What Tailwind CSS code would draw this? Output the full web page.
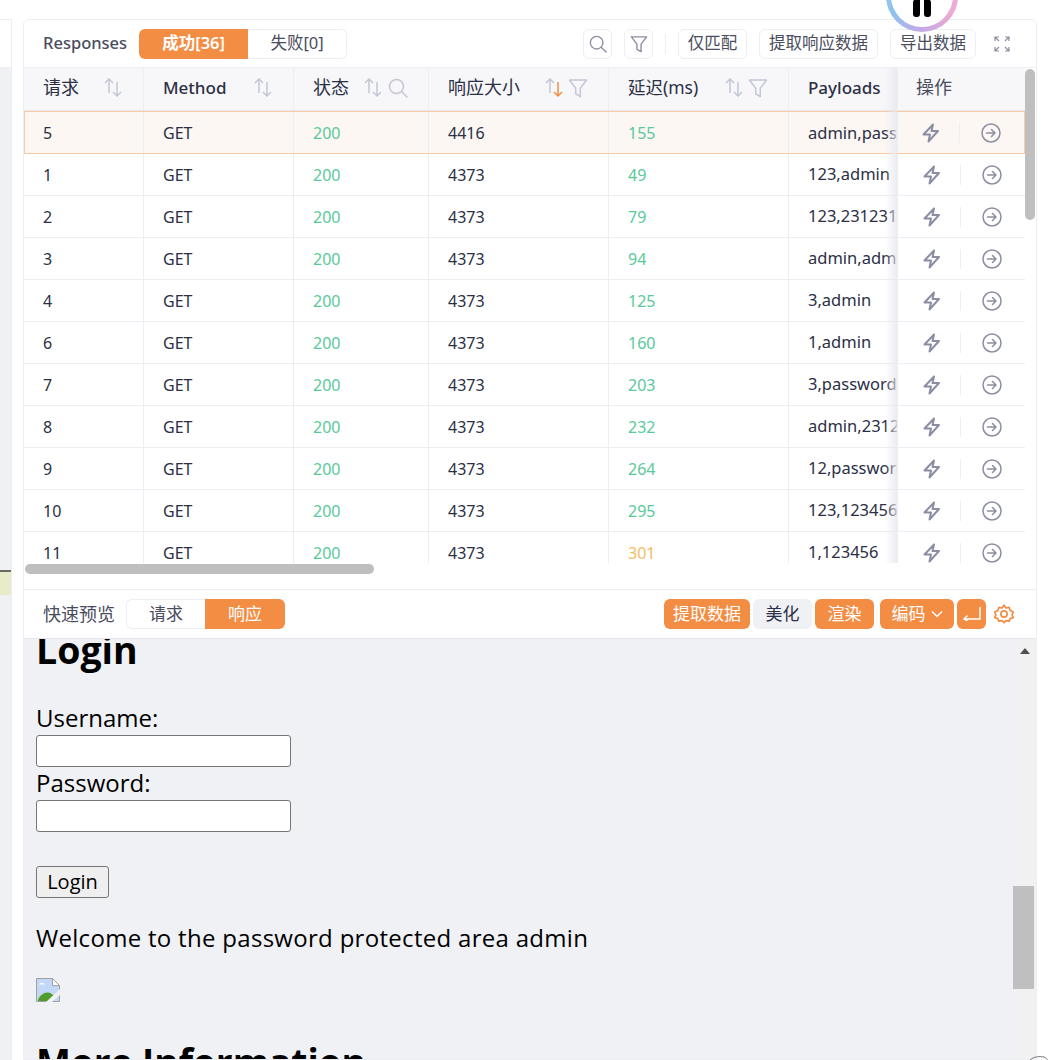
<!DOCTYPE html>
<html lang="en">
<head>
    <meta charset="UTF-8">
    <title>Responses</title>
    <script src="https://cdn.jsdelivr.net/npm/@tailwindcss/browser@4"></script>
</head>
<body class="w-[1054px] h-[1060px] overflow-hidden bg-white relative font-['Noto_Sans','Noto_Sans_CJK_SC',sans-serif] text-[#2b2f45]">

<!-- shared icons -->
<svg class="hidden">
    <symbol id="sort" viewBox="0 0 20 20" fill="none" stroke="currentColor" stroke-width="1.5">
        <path d="M6 15V1M2 5l4-4 4 4" />
        <path d="M14 4v14M10 14l4 4 4-4" />
    </symbol>
    <symbol id="search" viewBox="0 0 20 20" fill="none" stroke="currentColor" stroke-width="1.5">
        <circle cx="8.5" cy="8.5" r="7" />
        <path d="M13.5 13.5l5.5 5.5" stroke-linecap="round" />
    </symbol>
    <symbol id="filter" viewBox="0 0 20 20" fill="none" stroke="currentColor" stroke-width="1.5" stroke-linejoin="round">
        <path d="M1.500 2h17l-6.200 8.200v8.300l-4.600-2.600v-5.700z" />
    </symbol>
    <symbol id="bolt" viewBox="0 0 20 20" fill="none" stroke="currentColor" stroke-width="2" stroke-linejoin="round">
        <path d="M12 1.500 2.500 11.500h6.500l-1.500 7 9.500-10.500h-6.500z" />
    </symbol>
    <symbol id="go" viewBox="0 0 20 20" fill="none" stroke="currentColor" stroke-width="1.5" stroke-linecap="round" stroke-linejoin="round">
        <circle cx="10" cy="10" r="9" />
        <path d="M5.500 10h8.500M10.500 6.500 14 10l-3.500 3.500" />
    </symbol>
</svg>

<!-- neighbouring panel, cut off at the left -->
<div class="absolute left-0 top-[19px] w-3 h-[1041px] border-r border-t border-[#eceef4] flex flex-col">
    <div class="h-[47px] bg-white"></div>
    <div class="h-[503px] bg-[#f0f1f5]"></div>
    <div class="h-[2px] bg-[#6b6b60]"></div>
    <div class="h-[23px] bg-[#e8ecc8]"></div>
    <div class="flex-1 bg-[#f0f1f5]"></div>
</div>

<!-- app logo, overlapping the panel's top edge -->
<div class="absolute z-20 left-[886px] top-[-40px] w-[72px] h-[72px] rounded-full bg-[conic-gradient(from_180deg,#c4a9e4,#8cc3ee,#a3c6ee,#c4a9e4,#eeaad2,#eeaad2,#c4a9e4)] flex items-center justify-center">
    <div class="w-[62px] h-[62px] rounded-full bg-white flex items-end justify-center gap-[4px] pb-[10px]">
        <div class="w-[7px] h-[18px] bg-black rounded-b-[3px] rounded-tl-[4px]"></div>
        <div class="w-[7px] h-[18px] bg-black rounded-b-[3px] rounded-tr-[4px]"></div>
    </div>
</div>

<main class="absolute left-[23px] top-[19px] w-[1014px] h-[1041px] border border-[#eceef4] rounded-t-md flex flex-col">

    <!-- Responses toolbar -->
    <div class="h-[47px] flex items-center pl-[19px] pr-[26px]">
        <span class="text-[16.500px] text-[#4a4d5e] font-medium">Responses</span>
        <div class="ml-3 flex h-[30px] w-[208px] text-[16.500px]">
            <div class="w-[109px] bg-[#f48d44] text-white font-semibold rounded-l-md flex items-center justify-center">成功[36]</div>
            <div class="flex-1 border border-l-0 border-[#eceef4] rounded-r-md text-[#4a4d5e] flex items-center justify-center">失败[0]</div>
        </div>
        <div class="ml-auto flex items-center text-[16.500px] text-[#4a4d5e]">
            <div class="w-[29px] h-[30px] border border-[#eceef4] rounded-md flex items-center justify-center text-[#8b8ea3]">
                <svg class="w-[18px] h-[18px]"><use href="#search" /></svg>
            </div>
            <div class="ml-[12px] w-[29px] h-[30px] border border-[#eceef4] rounded-md flex items-center justify-center text-[#8b8ea3]">
                <svg class="w-[18px] h-[18px]"><use href="#filter" /></svg>
            </div>
            <div class="mx-[12px] w-px h-[20px] bg-[#eceef4]"></div>
            <div class="w-[69px] h-[30px] border border-[#eceef4] rounded-md flex items-center justify-center">仅匹配</div>
            <div class="ml-[12px] w-[119px] h-[30px] border border-[#eceef4] rounded-md flex items-center justify-center">提取响应数据</div>
            <div class="ml-[12px] w-[86px] h-[30px] border border-[#eceef4] rounded-md flex items-center justify-center">导出数据</div>
            <svg class="ml-[18px] w-[16px] h-[16px] text-[#8b8ea3]" viewBox="0 0 16 16" fill="none" stroke="currentColor" stroke-width="1.200">
                <path d="M1 5V1h4M11 1h4v4M15 11v4h-4M5 15H1v-4M1 1l4 4M15 1l-4 4M15 15l-4-4M1 15l4-4" />
            </svg>
        </div>
    </div>

    <!-- Response table -->
    <div class="relative h-[522px] border-t border-[#eceef4]">
        <div class="h-[495px] w-[1001px] overflow-hidden text-[16px]">
            <div class="grid grid-cols-[120px_150px_135px_180px_180px_108px_128px] h-[44px] bg-[#f7f7f9] border-b-2 border-[#e6e8f0] items-stretch">
                <div class="border-r border-[#eceef4] pb-[3px] pl-[19px] pr-[20px] flex items-center justify-between text-[18px]">请求<svg class="w-[20px] h-[20px] text-[#c3c7d6]"><use href="#sort" /></svg></div>
                <div class="border-r border-[#eceef4] pb-[3px] pl-[19px] pr-[20px] flex items-center justify-between text-[17px] font-medium">Method<svg class="w-[20px] h-[20px] text-[#c3c7d6]"><use href="#sort" /></svg></div>
                <div class="border-r border-[#eceef4] pb-[3px] pl-[19px] pr-[20px] flex items-center text-[18px]">状态<svg class="ml-[14px] w-[20px] h-[20px] text-[#c3c7d6]"><use href="#sort" /></svg><svg class="ml-[5px] w-[20px] h-[20px] text-[#c3c7d6]"><use href="#search" /></svg></div>
                <div class="border-r border-[#eceef4] pb-[3px] pl-[19px] pr-[20px] flex items-center justify-between text-[18px]">响应大小
                    <span class="flex items-center gap-[4px]">
                        <svg class="w-[20px] h-[20px]" viewBox="0 0 20 20" fill="none" stroke-width="1.500"><path d="M6 15V1M2 5l4-4 4 4" stroke="#c3c7d6" /><path d="M14 4v14M10 14l4 4 4-4" stroke="#f48d44" /></svg>
                        <svg class="w-[20px] h-[20px] text-[#c3c7d6]"><use href="#filter" /></svg>
                    </span>
                </div>
                <div class="border-r border-[#eceef4] pb-[3px] pl-[19px] pr-[20px] flex items-center justify-between text-[17.500px]">延迟(ms)
                    <span class="flex items-center gap-[4px]">
                        <svg class="w-[20px] h-[20px] text-[#c3c7d6]"><use href="#sort" /></svg>
                        <svg class="w-[20px] h-[20px] text-[#c3c7d6]"><use href="#filter" /></svg>
                    </span>
                </div>
                <div class="pb-[3px] pl-[19px] flex items-center text-[17px] font-medium overflow-hidden">Payloads</div>
                <div class="border-l border-[#eceef4] pb-[3px] pl-[18px] flex items-center text-[18px] text-[#4a4d5e]">操作</div>
            </div>

            <!-- highlighted row -->
            <div class="grid grid-cols-[120px_150px_135px_180px_180px_108px_128px] h-[43px] bg-[#fdf7f3] outline outline-[#fbc9a3] -outline-offset-1 -mt-px items-stretch pt-px">
                <div class="border-r border-[#eceef4] pl-[19px] flex items-center">5</div>
                <div class="border-r border-[#eceef4] pl-[19px] flex items-center">GET</div>
                <div class="border-r border-[#eceef4] pl-[19px] flex items-center text-[#5ac99a]">200</div>
                <div class="border-r border-[#eceef4] pl-[19px] flex items-center">4416</div>
                <div class="border-r border-[#eceef4] pl-[19px] flex items-center text-[#5ac99a]">155</div>
                <div class="pl-[19px] flex items-center overflow-hidden whitespace-nowrap text-[16.500px]">admin,password</div>
                <div class="border-l border-[#eceef4] flex items-center text-[#8b8ea3]">
                    <svg class="ml-[23px] w-[20px] h-[20px]"><use href="#bolt" /></svg>
                    <div class="ml-[18px] w-px h-[20px] bg-[#eceef4]"></div>
                    <svg class="ml-[21px] w-[20px] h-[20px]"><use href="#go" /></svg>
                </div>
            </div>

            <div class="grid grid-cols-[120px_150px_135px_180px_180px_108px_128px] h-[42px] border-b border-[#eceef4] items-stretch">
                <div class="border-r border-[#eceef4] pl-[19px] flex items-center">1</div>
                <div class="border-r border-[#eceef4] pl-[19px] flex items-center">GET</div>
                <div class="border-r border-[#eceef4] pl-[19px] flex items-center text-[#5ac99a]">200</div>
                <div class="border-r border-[#eceef4] pl-[19px] flex items-center">4373</div>
                <div class="border-r border-[#eceef4] pl-[19px] flex items-center text-[#5ac99a]">49</div>
                <div class="pl-[19px] flex items-center overflow-hidden whitespace-nowrap text-[16.500px]">123,admin</div>
                <div class="border-l border-[#eceef4] flex items-center text-[#8b8ea3]">
                    <svg class="ml-[24px] w-[20px] h-[20px]"><use href="#bolt" /></svg>
                    <div class="ml-[18px] w-px h-[20px] bg-[#eceef4]"></div>
                    <svg class="ml-[21px] w-[20px] h-[20px]"><use href="#go" /></svg>
                </div>
            </div>
            <div class="grid grid-cols-[120px_150px_135px_180px_180px_108px_128px] h-[42px] border-b border-[#eceef4] items-stretch">
                <div class="border-r border-[#eceef4] pl-[19px] flex items-center">2</div>
                <div class="border-r border-[#eceef4] pl-[19px] flex items-center">GET</div>
                <div class="border-r border-[#eceef4] pl-[19px] flex items-center text-[#5ac99a]">200</div>
                <div class="border-r border-[#eceef4] pl-[19px] flex items-center">4373</div>
                <div class="border-r border-[#eceef4] pl-[19px] flex items-center text-[#5ac99a]">79</div>
                <div class="pl-[19px] flex items-center overflow-hidden whitespace-nowrap text-[16.500px]">123,231231</div>
                <div class="border-l border-[#eceef4] flex items-center text-[#8b8ea3]">
                    <svg class="ml-[24px] w-[20px] h-[20px]"><use href="#bolt" /></svg>
                    <div class="ml-[18px] w-px h-[20px] bg-[#eceef4]"></div>
                    <svg class="ml-[21px] w-[20px] h-[20px]"><use href="#go" /></svg>
                </div>
            </div>
            <div class="grid grid-cols-[120px_150px_135px_180px_180px_108px_128px] h-[42px] border-b border-[#eceef4] items-stretch">
                <div class="border-r border-[#eceef4] pl-[19px] flex items-center">3</div>
                <div class="border-r border-[#eceef4] pl-[19px] flex items-center">GET</div>
                <div class="border-r border-[#eceef4] pl-[19px] flex items-center text-[#5ac99a]">200</div>
                <div class="border-r border-[#eceef4] pl-[19px] flex items-center">4373</div>
                <div class="border-r border-[#eceef4] pl-[19px] flex items-center text-[#5ac99a]">94</div>
                <div class="pl-[19px] flex items-center overflow-hidden whitespace-nowrap text-[16.500px]">admin,admin</div>
                <div class="border-l border-[#eceef4] flex items-center text-[#8b8ea3]">
                    <svg class="ml-[24px] w-[20px] h-[20px]"><use href="#bolt" /></svg>
                    <div class="ml-[18px] w-px h-[20px] bg-[#eceef4]"></div>
                    <svg class="ml-[21px] w-[20px] h-[20px]"><use href="#go" /></svg>
                </div>
            </div>
            <div class="grid grid-cols-[120px_150px_135px_180px_180px_108px_128px] h-[42px] border-b border-[#eceef4] items-stretch">
                <div class="border-r border-[#eceef4] pl-[19px] flex items-center">4</div>
                <div class="border-r border-[#eceef4] pl-[19px] flex items-center">GET</div>
                <div class="border-r border-[#eceef4] pl-[19px] flex items-center text-[#5ac99a]">200</div>
                <div class="border-r border-[#eceef4] pl-[19px] flex items-center">4373</div>
                <div class="border-r border-[#eceef4] pl-[19px] flex items-center text-[#5ac99a]">125</div>
                <div class="pl-[19px] flex items-center overflow-hidden whitespace-nowrap text-[16.500px]">3,admin</div>
                <div class="border-l border-[#eceef4] flex items-center text-[#8b8ea3]">
                    <svg class="ml-[24px] w-[20px] h-[20px]"><use href="#bolt" /></svg>
                    <div class="ml-[18px] w-px h-[20px] bg-[#eceef4]"></div>
                    <svg class="ml-[21px] w-[20px] h-[20px]"><use href="#go" /></svg>
                </div>
            </div>
            <div class="grid grid-cols-[120px_150px_135px_180px_180px_108px_128px] h-[42px] border-b border-[#eceef4] items-stretch">
                <div class="border-r border-[#eceef4] pl-[19px] flex items-center">6</div>
                <div class="border-r border-[#eceef4] pl-[19px] flex items-center">GET</div>
                <div class="border-r border-[#eceef4] pl-[19px] flex items-center text-[#5ac99a]">200</div>
                <div class="border-r border-[#eceef4] pl-[19px] flex items-center">4373</div>
                <div class="border-r border-[#eceef4] pl-[19px] flex items-center text-[#5ac99a]">160</div>
                <div class="pl-[19px] flex items-center overflow-hidden whitespace-nowrap text-[16.500px]">1,admin</div>
                <div class="border-l border-[#eceef4] flex items-center text-[#8b8ea3]">
                    <svg class="ml-[24px] w-[20px] h-[20px]"><use href="#bolt" /></svg>
                    <div class="ml-[18px] w-px h-[20px] bg-[#eceef4]"></div>
                    <svg class="ml-[21px] w-[20px] h-[20px]"><use href="#go" /></svg>
                </div>
            </div>
            <div class="grid grid-cols-[120px_150px_135px_180px_180px_108px_128px] h-[42px] border-b border-[#eceef4] items-stretch">
                <div class="border-r border-[#eceef4] pl-[19px] flex items-center">7</div>
                <div class="border-r border-[#eceef4] pl-[19px] flex items-center">GET</div>
                <div class="border-r border-[#eceef4] pl-[19px] flex items-center text-[#5ac99a]">200</div>
                <div class="border-r border-[#eceef4] pl-[19px] flex items-center">4373</div>
                <div class="border-r border-[#eceef4] pl-[19px] flex items-center text-[#5ac99a]">203</div>
                <div class="pl-[19px] flex items-center overflow-hidden whitespace-nowrap text-[16.500px]">3,password</div>
                <div class="border-l border-[#eceef4] flex items-center text-[#8b8ea3]">
                    <svg class="ml-[24px] w-[20px] h-[20px]"><use href="#bolt" /></svg>
                    <div class="ml-[18px] w-px h-[20px] bg-[#eceef4]"></div>
                    <svg class="ml-[21px] w-[20px] h-[20px]"><use href="#go" /></svg>
                </div>
            </div>
            <div class="grid grid-cols-[120px_150px_135px_180px_180px_108px_128px] h-[42px] border-b border-[#eceef4] items-stretch">
                <div class="border-r border-[#eceef4] pl-[19px] flex items-center">8</div>
                <div class="border-r border-[#eceef4] pl-[19px] flex items-center">GET</div>
                <div class="border-r border-[#eceef4] pl-[19px] flex items-center text-[#5ac99a]">200</div>
                <div class="border-r border-[#eceef4] pl-[19px] flex items-center">4373</div>
                <div class="border-r border-[#eceef4] pl-[19px] flex items-center text-[#5ac99a]">232</div>
                <div class="pl-[19px] flex items-center overflow-hidden whitespace-nowrap text-[16.500px]">admin,231231</div>
                <div class="border-l border-[#eceef4] flex items-center text-[#8b8ea3]">
                    <svg class="ml-[24px] w-[20px] h-[20px]"><use href="#bolt" /></svg>
                    <div class="ml-[18px] w-px h-[20px] bg-[#eceef4]"></div>
                    <svg class="ml-[21px] w-[20px] h-[20px]"><use href="#go" /></svg>
                </div>
            </div>
            <div class="grid grid-cols-[120px_150px_135px_180px_180px_108px_128px] h-[42px] border-b border-[#eceef4] items-stretch">
                <div class="border-r border-[#eceef4] pl-[19px] flex items-center">9</div>
                <div class="border-r border-[#eceef4] pl-[19px] flex items-center">GET</div>
                <div class="border-r border-[#eceef4] pl-[19px] flex items-center text-[#5ac99a]">200</div>
                <div class="border-r border-[#eceef4] pl-[19px] flex items-center">4373</div>
                <div class="border-r border-[#eceef4] pl-[19px] flex items-center text-[#5ac99a]">264</div>
                <div class="pl-[19px] flex items-center overflow-hidden whitespace-nowrap text-[16.500px]">12,password</div>
                <div class="border-l border-[#eceef4] flex items-center text-[#8b8ea3]">
                    <svg class="ml-[24px] w-[20px] h-[20px]"><use href="#bolt" /></svg>
                    <div class="ml-[18px] w-px h-[20px] bg-[#eceef4]"></div>
                    <svg class="ml-[21px] w-[20px] h-[20px]"><use href="#go" /></svg>
                </div>
            </div>
            <div class="grid grid-cols-[120px_150px_135px_180px_180px_108px_128px] h-[42px] border-b border-[#eceef4] items-stretch">
                <div class="border-r border-[#eceef4] pl-[19px] flex items-center">10</div>
                <div class="border-r border-[#eceef4] pl-[19px] flex items-center">GET</div>
                <div class="border-r border-[#eceef4] pl-[19px] flex items-center text-[#5ac99a]">200</div>
                <div class="border-r border-[#eceef4] pl-[19px] flex items-center">4373</div>
                <div class="border-r border-[#eceef4] pl-[19px] flex items-center text-[#5ac99a]">295</div>
                <div class="pl-[19px] flex items-center overflow-hidden whitespace-nowrap text-[16.500px]">123,123456</div>
                <div class="border-l border-[#eceef4] flex items-center text-[#8b8ea3]">
                    <svg class="ml-[24px] w-[20px] h-[20px]"><use href="#bolt" /></svg>
                    <div class="ml-[18px] w-px h-[20px] bg-[#eceef4]"></div>
                    <svg class="ml-[21px] w-[20px] h-[20px]"><use href="#go" /></svg>
                </div>
            </div>
            <div class="grid grid-cols-[120px_150px_135px_180px_180px_108px_128px] h-[42px] border-b border-[#eceef4] items-stretch">
                <div class="border-r border-[#eceef4] pl-[19px] flex items-center">11</div>
                <div class="border-r border-[#eceef4] pl-[19px] flex items-center">GET</div>
                <div class="border-r border-[#eceef4] pl-[19px] flex items-center text-[#5ac99a]">200</div>
                <div class="border-r border-[#eceef4] pl-[19px] flex items-center">4373</div>
                <div class="border-r border-[#eceef4] pl-[19px] flex items-center text-[#f7bb63]">301</div>
                <div class="pl-[19px] flex items-center overflow-hidden whitespace-nowrap text-[16.500px]">1,123456</div>
                <div class="border-l border-[#eceef4] flex items-center text-[#8b8ea3]">
                    <svg class="ml-[24px] w-[20px] h-[20px]"><use href="#bolt" /></svg>
                    <div class="ml-[18px] w-px h-[20px] bg-[#eceef4]"></div>
                    <svg class="ml-[21px] w-[20px] h-[20px]"><use href="#go" /></svg>
                </div>
            </div>
        </div>
        <!-- soft shadow in front of the fixed column -->
        <div class="absolute left-[861px] top-0 w-[12px] h-[495px] bg-linear-to-l from-[#e6e7ef]/80 to-transparent"></div>
        <!-- scrollbars of the table -->
        <div class="absolute left-px top-[496px] w-[349px] h-[10px] rounded-full bg-[#bfbfbf]"></div>
        <div class="absolute left-[1001px] top-px w-[10px] h-[151px] rounded-full bg-[#bfbfbf]"></div>
    </div>

    <!-- Quick preview toolbar -->
    <div class="h-[49px] border-t border-[#eceef4] flex items-center pl-[19px] pr-[22px] text-[17px]">
        <span class="text-[18px] text-[#4a4d5e]">快速预览</span>
        <div class="ml-[11px] flex h-[30px] w-[159px]">
            <div class="w-[79px] border border-r-0 border-[#eceef4] rounded-l-md text-[#4a4d5e] flex items-center justify-center">请求</div>
            <div class="flex-1 bg-[#f48d44] text-white rounded-r-md flex items-center justify-center">响应</div>
        </div>
        <div class="ml-auto flex items-center h-[30px]">
            <div class="w-[86px] h-full bg-[#f48d44] text-white rounded-md flex items-center justify-center">提取数据</div>
            <div class="ml-[3px] w-[59px] h-full bg-[#f0f1f5] rounded-md flex items-center justify-center">美化</div>
            <div class="ml-[3px] w-[59px] h-full bg-[#f48d44] text-white rounded-md flex items-center justify-center">渲染</div>
            <div class="ml-[6px] w-[74px] h-full bg-[#f48d44] text-white rounded-md flex items-center justify-center gap-[5px]">编码
                <svg class="w-[12px] h-[12px]" viewBox="0 0 12 12" fill="none" stroke="currentColor" stroke-width="1.500"><path d="M1 3.500l5 5 5-5" /></svg>
            </div>
            <div class="ml-[3px] w-[29px] h-full bg-[#f48d44] text-white rounded-md flex items-center justify-center">
                <svg class="w-[18px] h-[14px]" viewBox="0 0 18 14" fill="none" stroke="currentColor" stroke-width="1.500"><path d="M17 0v12H1M4.500 8.500 1 12l3.500 2" /></svg>
            </div>
            <svg class="ml-[8px] w-[20px] h-[20px] text-[#f48d44]" viewBox="0 0 24 24" fill="none" stroke="currentColor" stroke-width="2" stroke-linejoin="round">
                <path d="M12 1.500l2.300 3.300 3.900-.7 1.200 3.800 3.600 1.700-1.300 3.400 1.300 3.400-3.600 1.100-1.200 3.100-3.900-.6L12 22.500l-2.300-2.500-3.900.6-1.200-3.100L1 16.400l1.300-3.400L1 9.600l3.600-1.700 1.200-3.800 3.900.7z" />
                <circle cx="12" cy="12" r="3.800" />
            </svg>
        </div>
    </div>

    <!-- Rendered response -->
    <div class="relative flex-1 border-t border-[#e6e8f0] bg-[#f0f1f5] overflow-hidden text-black font-['Open_Sans','Noto_Sans',sans-serif]">
        <div class="pl-[12px] pr-[40px] -mt-[13px] text-[24px] leading-[32px]">
            <h1 class="text-[37.500px] leading-[48px] font-bold">Login</h1>
            <div class="mt-[28px]">Username:</div>
            <div class="mt-px w-[255px] h-[32px] bg-white border border-[#767676] rounded-[3px]"></div>
            <div>Password:</div>
            <div class="mt-px w-[255px] h-[32px] bg-white border border-[#767676] rounded-[3px]"></div>
            <div class="mt-[34px] w-[73px] h-[32px] bg-[#efefef] border border-[#767676] rounded-[3px] text-[20px] leading-[30px] text-center">Login</div>
            <p class="mt-[24px] text-[24px] leading-[32px] tracking-[0.3px]">Welcome to the password protected area admin</p>
            <svg class="mt-[24px] block w-[24px] h-[24px]" viewBox="0 0 24 24">
                <path d="M.5.500h16l7 7v16H.5z" fill="#c3d8f6" stroke="#a0a0a0" />
                <path d="M16.500.500v7h7z" fill="#fff" stroke="#a0a0a0" />
                <path d="M2 22c2-6 9-10 14-6l3 3-3 4H2z" fill="#4f9c2a" />
                <path d="M3 6.500c1-2 5-2 6 0z" fill="#fff" />
                <path d="M10 24 24 11v6l-8 7z" fill="#f0f1f5" />
            </svg>
            <h1 class="mt-[36px] text-[37px] leading-[48px] font-bold whitespace-nowrap">More Information</h1>
        </div>
        <!-- preview scrollbar -->
        <div class="absolute right-0 top-0 bottom-0 w-[23px] bg-[#f1f1f1]">
            <div class="mx-auto mt-[9px] w-0 h-0 border-x-[5px] border-x-transparent border-b-[6px] border-b-[#505050]"></div>
            <div class="absolute left-0 top-[247px] w-[21px] h-[103px] bg-[#bfbfbf]"></div>
        </div>
    </div>
</main>

<svg class="absolute left-[1030px] top-[1056px] w-[24px] h-[6px]" viewBox="0 0 24 6" fill="none" stroke="#777"><path d="M0 4c3-3 9-4 14-3 2 .5 3 2 4 4" /></svg>

</body>
</html>
